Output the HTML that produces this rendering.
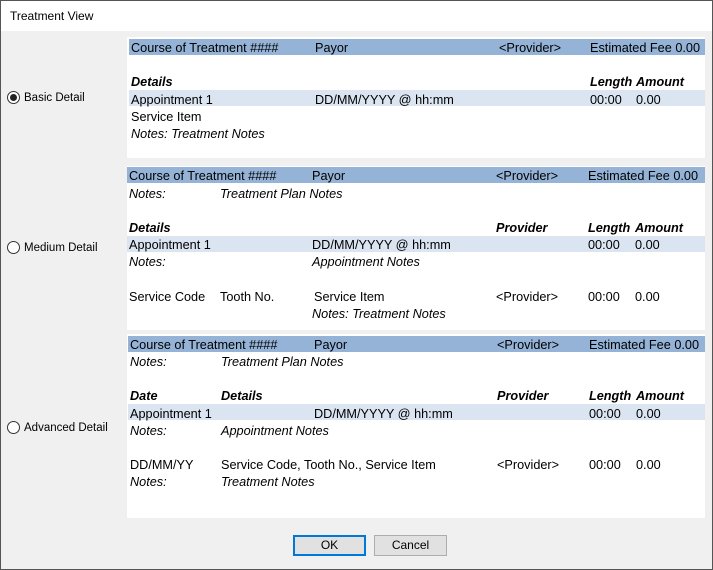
<!DOCTYPE html>
<html><head><style>
*{margin:0;padding:0;box-sizing:border-box}
body{width:713px;height:570px;background:#f0f0f0;font-family:"Liberation Sans",sans-serif;font-size:12.7px;color:#000;position:relative;overflow:hidden}
.win{position:absolute;left:0;top:0;width:713px;height:570px;border:1px solid #555;}
.title{position:absolute;left:1px;top:1px;width:711px;height:30px;background:#fff;}
.title span{position:absolute;left:9px;top:8px;font-size:12px}
.p{position:absolute;background:#fff}
.hdr{position:absolute;background:#95b3d7;height:16px}
.lt{position:absolute;background:#dbe5f1;height:16px}
.t{position:absolute;line-height:16px;white-space:nowrap;margin-top:1px}
.i{font-style:italic}
.b{font-weight:bold;font-style:italic}
.rl{font-size:11.5px}
.radio{position:absolute;width:13px;height:13px;border:1px solid #333;border-radius:50%;background:#fff}
.radio.on::after{content:"";position:absolute;left:2px;top:2px;width:7px;height:7px;border-radius:50%;background:#222}
.btn{position:absolute;height:21px;background:#e1e1e1;border:1px solid #adadad;text-align:center;line-height:19px;font-size:12px}
</style></head><body>
<div class="win"></div>
<div class="title"><span>Treatment View</span></div>

<div class="radio on" style="left:7px;top:91px"></div><div class="t rl" style="left:24px;top:89px">Basic Detail</div>
<div class="radio" style="left:7px;top:241px"></div><div class="t rl" style="left:24px;top:239px">Medium Detail</div>
<div class="radio" style="left:7px;top:421px"></div><div class="t rl" style="left:24px;top:419px">Advanced Detail</div>

<!-- panel 1 -->
<div class="p" style="left:127px;top:37px;width:578px;height:121px"></div>
<div class="hdr" style="left:129px;top:39px;width:576px"></div>
<div class="t" style="left:131px;top:39px">Course of Treatment ####</div>
<div class="t" style="left:315px;top:39px">Payor</div>
<div class="t" style="left:499px;top:39px">&lt;Provider&gt;</div>
<div class="t" style="left:590px;top:39px">Estimated Fee 0.00</div>
<div class="t b" style="left:131px;top:73px">Details</div>
<div class="t b" style="left:590px;top:73px">Length</div>
<div class="t b" style="left:636px;top:73px">Amount</div>
<div class="lt" style="left:129px;top:90px;width:576px"></div>
<div class="t" style="left:131px;top:91px">Appointment 1</div>
<div class="t" style="left:315px;top:91px">DD/MM/YYYY @ hh:mm</div>
<div class="t" style="left:590px;top:91px">00:00</div>
<div class="t" style="left:636px;top:91px">0.00</div>
<div class="t" style="left:131px;top:108px">Service Item</div>
<div class="t i" style="left:131px;top:125px">Notes: Treatment Notes</div>

<!-- panel 2 -->
<div class="p" style="left:127px;top:166px;width:578px;height:164px"></div>
<div class="hdr" style="left:127px;top:167px;width:578px"></div>
<div class="t" style="left:129px;top:167px">Course of Treatment ####</div>
<div class="t" style="left:312px;top:167px">Payor</div>
<div class="t" style="left:496px;top:167px">&lt;Provider&gt;</div>
<div class="t" style="left:588px;top:167px">Estimated Fee 0.00</div>
<div class="t i" style="left:129px;top:185px">Notes:</div>
<div class="t i" style="left:220px;top:185px">Treatment Plan Notes</div>
<div class="t b" style="left:129px;top:219px">Details</div>
<div class="t b" style="left:496px;top:219px">Provider</div>
<div class="t b" style="left:588px;top:219px">Length</div>
<div class="t b" style="left:635px;top:219px">Amount</div>
<div class="lt" style="left:127px;top:236px;width:578px"></div>
<div class="t" style="left:129px;top:236px">Appointment 1</div>
<div class="t" style="left:312px;top:236px">DD/MM/YYYY @ hh:mm</div>
<div class="t" style="left:588px;top:236px">00:00</div>
<div class="t" style="left:635px;top:236px">0.00</div>
<div class="t i" style="left:129px;top:253px">Notes:</div>
<div class="t i" style="left:312px;top:253px">Appointment Notes</div>
<div class="t" style="left:129px;top:288px">Service Code</div>
<div class="t" style="left:220px;top:288px">Tooth No.</div>
<div class="t" style="left:314px;top:288px">Service Item</div>
<div class="t" style="left:496px;top:288px">&lt;Provider&gt;</div>
<div class="t" style="left:588px;top:288px">00:00</div>
<div class="t" style="left:635px;top:288px">0.00</div>
<div class="t i" style="left:312px;top:305px">Notes: Treatment Notes</div>

<!-- panel 3 -->
<div class="p" style="left:127px;top:334px;width:578px;height:184px"></div>
<div class="hdr" style="left:128px;top:336px;width:577px"></div>
<div class="t" style="left:130px;top:336px">Course of Treatment ####</div>
<div class="t" style="left:314px;top:336px">Payor</div>
<div class="t" style="left:497px;top:336px">&lt;Provider&gt;</div>
<div class="t" style="left:589px;top:336px">Estimated Fee 0.00</div>
<div class="t i" style="left:130px;top:353px">Notes:</div>
<div class="t i" style="left:221px;top:353px">Treatment Plan Notes</div>
<div class="t b" style="left:130px;top:387px">Date</div>
<div class="t b" style="left:221px;top:387px">Details</div>
<div class="t b" style="left:497px;top:387px">Provider</div>
<div class="t b" style="left:589px;top:387px">Length</div>
<div class="t b" style="left:636px;top:387px">Amount</div>
<div class="lt" style="left:128px;top:404px;width:577px"></div>
<div class="t" style="left:130px;top:405px">Appointment 1</div>
<div class="t" style="left:314px;top:405px">DD/MM/YYYY @ hh:mm</div>
<div class="t" style="left:589px;top:405px">00:00</div>
<div class="t" style="left:636px;top:405px">0.00</div>
<div class="t i" style="left:130px;top:422px">Notes:</div>
<div class="t i" style="left:221px;top:422px">Appointment Notes</div>
<div class="t" style="left:130px;top:456px">DD/MM/YY</div>
<div class="t" style="left:221px;top:456px">Service Code, Tooth No., Service Item</div>
<div class="t" style="left:497px;top:456px">&lt;Provider&gt;</div>
<div class="t" style="left:589px;top:456px">00:00</div>
<div class="t" style="left:636px;top:456px">0.00</div>
<div class="t i" style="left:130px;top:473px">Notes:</div>
<div class="t i" style="left:221px;top:473px">Treatment Notes</div>

<div class="btn" style="left:293px;top:535px;width:73px;border:2px solid #0078d7;line-height:17px">OK</div>
<div class="btn" style="left:374px;top:535px;width:73px">Cancel</div>
</body></html>
